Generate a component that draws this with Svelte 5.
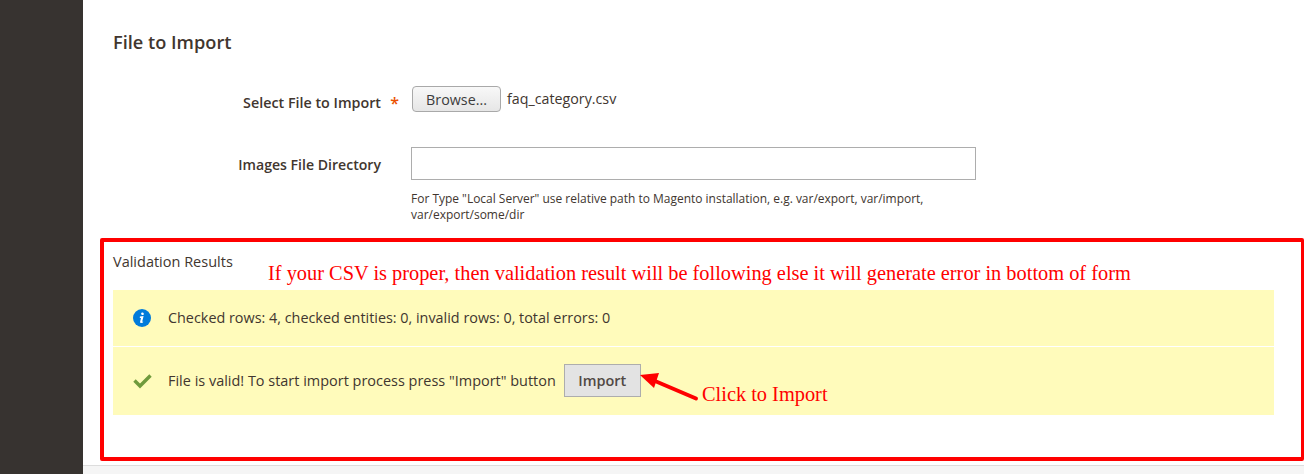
<script>
  let fileName = "faq_category.csv";
  let checked = { rows: 4, entities: 0, invalid: 0, errors: 0 };
</script>

<div class="page">
  <aside class="menu"></aside>

  <div class="main">
    <div class="content">
      <h2 class="title">File to Import</h2>

      <div class="field file-field">
        <div class="label required">
          <span>Select File to Import</span>
          <span class="star">*</span>
        </div>
        <div class="control file-control">
          <button class="browse">Browse...</button>
          <span class="file-name">{fileName}</span>
        </div>
      </div>

      <div class="field dir-field">
        <div class="label"><span>Images File Directory</span></div>
        <div class="control">
          <input class="text-input" type="text" />
          <p class="note">For Type "Local Server" use relative path to Magento installation, e.g. var/export, var/import, var/export/some/dir</p>
        </div>
      </div>
    </div>

    <section class="results">
      <div class="results-head">
        <span class="results-title">Validation Results</span>
        <span class="hint">If your CSV is proper, then validation result will be following else it will generate error in bottom of form</span>
      </div>

      <div class="messages">
        <div class="message info">
          <svg class="icon" width="18" height="18" viewBox="0 0 18 18">
            <circle cx="9" cy="9" r="9" fill="#007bdb" />
            <path d="M9.6 3.4a1.35 1.35 0 1 1 -.3 2.7a1.35 1.35 0 0 1 .3-2.7zM6.9 7.6l3.7-.5-1.3 5.2c-.1.5.2.6.9.3l-.2.9c-1 .6-3.1 1-2.9-.7l.9-3.9-1.2.1z" fill="#fff" />
          </svg>
          <span>Checked rows: {checked.rows}, checked entities: {checked.entities}, invalid rows: {checked.invalid}, total errors: {checked.errors}</span>
        </div>
        <div class="message ok">
          <svg class="icon" width="20" height="16" viewBox="0 0 20 16">
            <path d="M2.500 7.500L8 13L18.500 2.500" fill="none" stroke="#6f9a3c" stroke-width="3.400" />
          </svg>
          <span>File is valid! To start import process press "Import" button</span>
          <button class="import">Import</button>
        </div>
      </div>

      <svg class="arrow" width="62" height="30" viewBox="0 0 62 30">
        <path d="M57 26.500L16 9" stroke="#f00" stroke-width="4" stroke-linecap="round" />
        <path d="M1 3L20 1L15 16z" fill="#f00" />
      </svg>
      <span class="hint click">Click to Import</span>
    </section>

    <footer class="footer"></footer>
  </div>
</div>

<style>
  :global(body) {
    margin: 0;
    background: #fff;
  }

  .page {
    display: flex;
    height: 474px;
    overflow: hidden;
    font-family: "Open Sans", "Noto Sans", sans-serif;
    color: #41362f;
    font-size: 14.4px;
  }

  .menu {
    width: 83px;
    flex: none;
    background: #373330;
  }

  .main {
    flex: 1;
    min-width: 0;
    display: flex;
    flex-direction: column;
  }

  .content {
    height: 238px;
    padding-left: 30px;
    box-sizing: border-box;
  }

  .title {
    margin: 0;
    padding-top: 30px;
    font-size: 18.2px;
    line-height: 24px;
    font-weight: 600;
  }

  .field {
    display: flex;
  }

  .file-field {
    margin-top: 32px;
  }

  .dir-field {
    margin-top: 35px;
  }

  .label {
    width: 298px;
    flex: none;
    display: flex;
    justify-content: flex-end;
    font-weight: 600;
    font-size: 14.3px;
    line-height: 19px;
    padding-right: 30px;
    box-sizing: border-box;
    position: relative;
  }

  .file-field .label {
    padding-top: 7px;
  }

  .dir-field .label {
    padding-top: 8px;
    font-size: 14.1px;
  }

  .star {
    position: absolute;
    right: 12px;
    top: 8px;
    color: #eb5202;
    font-size: 16px;
  }

  .file-control {
    display: flex;
    align-items: flex-start;
    gap: 6px;
  }

  .browse {
    width: 89px;
    height: 26px;
    padding: 0;
    margin-left: 1px;
    border: 1px solid #a9a9a9;
    border-radius: 4px;
    background: linear-gradient(#f8f8f8, #e6e6e6);
    font: inherit;
    font-size: 14.3px;
    color: #3c3c3c;
  }

  .file-name {
    line-height: 26px;
    font-size: 14.25px;
  }

  .text-input {
    display: block;
    width: 565px;
    height: 33px;
    box-sizing: border-box;
    border: 1px solid #adadad;
    padding: 0 10px;
    background: #fff;
  }

  .note {
    margin: 11px 0 0;
    width: 565px;
    font-size: 11.97px;
    line-height: 16px;
    color: #41362f;
  }

  .results {
    position: relative;
    margin-left: 17px;
    height: 223px;
    box-sizing: border-box;
    border: 4px solid #f00;
    border-right-width: 3px;
    border-radius: 2px;
    padding: 0 27px 0 9px;
  }

  .results-head {
    height: 48px;
    position: relative;
  }

  .results-title {
    display: block;
    padding-top: 10px;
    line-height: 19px;
    font-size: 14.5px;
    color: #41362f;
  }

  .hint {
    font-family: "Liberation Serif", "Times New Roman", serif;
    font-size: 20.38px;
    line-height: 23px;
    color: #f00;
    white-space: nowrap;
  }

  .results-head .hint {
    position: absolute;
    left: 155px;
    top: 20px;
  }

  .click {
    position: absolute;
    left: 598px;
    top: 141px;
  }

  .arrow {
    position: absolute;
    left: 535px;
    top: 130px;
  }

  .messages {
    background: #fffbbb;
    font-size: 14.46px;
  }

  .message {
    display: flex;
    align-items: center;
    padding-left: 19px;
  }

  .message.info {
    height: 55px;
    padding-bottom: 1px;
    border-bottom: 1px solid #fff;
    font-size: 14.38px;
  }

  .message.ok {
    height: 67px;
    padding-bottom: 1px;
  }

  .icon {
    flex: none;
    width: 20px;
    margin-right: 16px;
  }

  .info .icon {
    width: 18px;
    margin-left: 1px;
    margin-right: 17px;
  }

  .import {
    width: 77px;
    height: 33px;
    margin-left: 8px;
    padding: 0;
    border: 1px solid #adadad;
    background: #e3e3e3;
    font: inherit;
    font-weight: 600;
    color: #514943;
  }

  .footer {
    margin-top: 4px;
    flex: 1;
    background: #f5f5f5;
    border-top: 1px solid #ddd;
  }
</style>
